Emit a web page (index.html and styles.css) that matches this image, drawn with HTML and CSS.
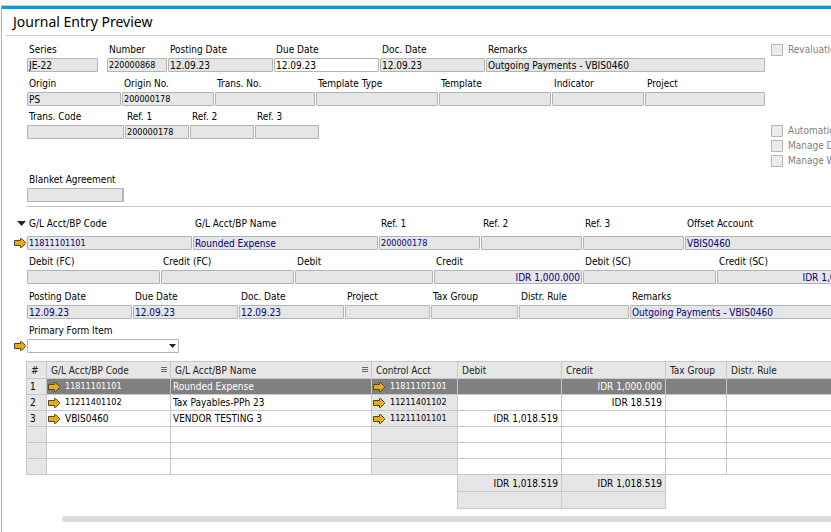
FILE: index.html
```html
<!DOCTYPE html>
<html lang="en">
<head>
    <meta charset="UTF-8">
    <title>Journal Entry Preview</title>
    <link rel="stylesheet" href="styles.css">
</head>
<body>
<svg class="defs" aria-hidden="true">
    <symbol id="arrow" viewBox="0 0 12 10">
        <path d="M.5 2.5h6v-2h1l4 4v1l-4 4h-1v-2h-6z" fill="#f0ab00" stroke="#4d4434"/>
    </symbol>
    <symbol id="menu" viewBox="0 0 6 6">
        <path d="M0 .5h6M0 2.5h6M0 4.5h6" stroke="#666"/>
    </symbol>
</svg>
<main class="window">
    <h1>Journal Entry Preview</h1>

    <section class="header">
        <div class="header-fields">
            <div class="row cols-series">
                <label class="field series">Series<input readonly value="JE-22"></label>
                <label class="field">Number<input class="code" readonly value="220000868"></label>
                <label class="field">Posting Date<input readonly value="12.09.23"></label>
                <label class="field">Due Date<input class="editable" value="12.09.23"></label>
                <label class="field">Doc. Date<input readonly value="12.09.23"></label>
                <label class="field">Remarks<input readonly value="Outgoing Payments - VBIS0460"></label>
            </div>
            <div class="row cols-origin">
                <label class="field">Origin<input readonly value="PS"></label>
                <label class="field">Origin No.<input class="code" readonly value="200000178"></label>
                <label class="field">Trans. No.<input readonly></label>
                <label class="field">Template Type<input readonly></label>
                <label class="field">Template<input readonly></label>
                <label class="field">Indicator<input readonly></label>
                <label class="field">Project<input readonly></label>
            </div>
            <div class="row cols-trans">
                <label class="field">Trans. Code<input readonly></label>
                <label class="field">Ref. 1<input class="code" readonly value="200000178"></label>
                <label class="field">Ref. 2<input readonly></label>
                <label class="field">Ref. 3<input readonly></label>
            </div>
            <div class="row cols-trans blanket">
                <label class="field">Blanket Agreement<input readonly></label>
            </div>
        </div>
        <div class="checks">
            <label class="check first"><input type="checkbox" disabled>Revaluation</label>
            <label class="check"><input type="checkbox" disabled>Automatic Tax</label>
            <label class="check"><input type="checkbox" disabled>Manage Deferred Tax</label>
            <label class="check"><input type="checkbox" disabled>Manage WTax</label>
        </div>
    </section>

    <section class="details">
        <div class="row cols-account">
            <div class="lead">
                <button class="toggle" aria-label="Collapse"><svg viewBox="0 0 9 5"><path d="M0 0h9L4.500 5z" fill="#223"/></svg></button>
                <button class="link" aria-label="Open account"><svg><use href="#arrow"/></svg></button>
            </div>
            <label class="field">G/L Acct/BP Code<input class="code" readonly value="11811101101"></label>
            <label class="field">G/L Acct/BP Name<input readonly value="Rounded Expense"></label>
            <label class="field">Ref. 1<input class="code" readonly value="200000178"></label>
            <label class="field">Ref. 2<input readonly></label>
            <label class="field">Ref. 3<input readonly></label>
            <label class="field">Offset Account<input readonly value="VBIS0460"></label>
        </div>
        <div class="row cols-amount">
            <div class="lead"></div>
            <label class="field">Debit (FC)<input readonly></label>
            <label class="field">Credit (FC)<input readonly></label>
            <label class="field">Debit<input readonly></label>
            <label class="field">Credit<input class="amount" readonly value="IDR 1,000.000"></label>
            <label class="field">Debit (SC)<input readonly></label>
            <label class="field">Credit (SC)<input class="amount" readonly value="IDR 1,000.000"></label>
        </div>
        <div class="row cols-dates">
            <div class="lead"></div>
            <label class="field">Posting Date<input readonly value="12.09.23"></label>
            <label class="field">Due Date<input readonly value="12.09.23"></label>
            <label class="field">Doc. Date<input readonly value="12.09.23"></label>
            <label class="field">Project<input readonly></label>
            <label class="field">Tax Group<input readonly></label>
            <label class="field">Distr. Rule<input readonly></label>
            <label class="field">Remarks<input readonly value="Outgoing Payments - VBIS0460"></label>
        </div>
        <div class="row cols-form">
            <div class="lead">
                <button class="link" aria-label="Open form item"><svg><use href="#arrow"/></svg></button>
            </div>
            <label class="field">Primary Form Item<select><option></option></select></label>
        </div>
    </section>

    <table class="lines">
        <colgroup>
            <col class="c-no"><col class="c-code"><col class="c-name"><col class="c-control">
            <col class="c-debit"><col class="c-credit"><col class="c-tax"><col>
        </colgroup>
        <thead>
        <tr>
            <th>#</th>
            <th><span class="head">G/L Acct/BP Code<svg class="menu"><use href="#menu"/></svg></span></th>
            <th><span class="head">G/L Acct/BP Name<svg class="menu"><use href="#menu"/></svg></span></th>
            <th>Control Acct</th>
            <th>Debit</th>
            <th>Credit</th>
            <th>Tax Group</th>
            <th>Distr. Rule</th>
        </tr>
        </thead>
        <tbody>
        <tr class="selected">
            <td class="grey">1</td>
            <td class="linked"><span class="cell code"><button class="link" aria-label="Open account"><svg><use href="#arrow"/></svg></button>11811101101</span></td>
            <td>Rounded Expense</td>
            <td class="linked grey"><span class="cell code"><button class="link" aria-label="Open account"><svg><use href="#arrow"/></svg></button>11811101101</span></td>
            <td></td>
            <td class="amount">IDR 1,000.000</td>
            <td></td>
            <td></td>
        </tr>
        <tr>
            <td class="grey">2</td>
            <td class="linked"><span class="cell code"><button class="link" aria-label="Open account"><svg><use href="#arrow"/></svg></button>11211401102</span></td>
            <td>Tax Payables-PPh 23</td>
            <td class="linked grey"><span class="cell code"><button class="link" aria-label="Open account"><svg><use href="#arrow"/></svg></button>11211401102</span></td>
            <td></td>
            <td class="amount">IDR 18.519</td>
            <td></td>
            <td></td>
        </tr>
        <tr>
            <td class="grey">3</td>
            <td class="linked"><span class="cell"><button class="link" aria-label="Open partner"><svg><use href="#arrow"/></svg></button>VBIS0460</span></td>
            <td>VENDOR TESTING 3</td>
            <td class="linked grey"><span class="cell code"><button class="link" aria-label="Open account"><svg><use href="#arrow"/></svg></button>11211101101</span></td>
            <td class="amount">IDR 1,018.519</td>
            <td></td>
            <td></td>
            <td></td>
        </tr>
        <tr><td class="grey"></td><td></td><td></td><td class="grey"></td><td></td><td></td><td></td><td></td></tr>
        <tr><td class="grey"></td><td></td><td></td><td class="grey"></td><td></td><td></td><td></td><td></td></tr>
        <tr><td class="grey"></td><td></td><td></td><td class="grey"></td><td></td><td></td><td></td><td></td></tr>
        </tbody>
        <tfoot>
        <tr>
            <td class="blank" colspan="4"></td>
            <td class="amount">IDR 1,018.519</td>
            <td class="amount">IDR 1,018.519</td>
            <td class="blank" colspan="2"></td>
        </tr>
        <tr>
            <td class="blank" colspan="4"></td>
            <td></td>
            <td></td>
            <td class="blank" colspan="2"></td>
        </tr>
        </tfoot>
    </table>
    <div class="scrollbar"></div>
</main>
</body>
</html>
```

FILE: styles.css
```css
* {
    box-sizing: border-box;
}
body {
    margin: 0;
    padding: 5px 0 0 1px;
    background: #fafafa;
    color: #000;
    font: 10px/16px "DejaVu Sans Condensed", "DejaVu Sans", sans-serif;
    font-stretch: condensed;
    overflow: hidden;
}
.defs {
    display: none;
}
.window {
    min-height: calc(100vh - 5px);
    background: #fff;
    border-top: 1px solid #c8c8c8;
    border-left: 1px solid #b4b4b4;
    overflow: hidden;
}
.window::before {
    content: "";
    display: block;
    height: 3px;
    background: #009de0;
}
h1 {
    margin: 0 0 0 4px;
    padding: 0 7px;
    border-bottom: 1px solid #c8c8c8;
    font: 14px/26px "Noto Sans", sans-serif;
}

/* fields */
.row {
    display: grid;
    column-gap: 1px;
}
.field {
    display: block;
    padding-left: 2px;
    white-space: nowrap;
}
input, select {
    display: block;
    width: calc(100% + 2px);
    height: 14px;
    margin: 0 0 0 -2px;
    padding: 0 1px;
    border: 1px solid #b0b4b4;
    border-radius: 1px;
    background: #e6e6e6;
    color: inherit;
    font: inherit;
    line-height: 12px;
}
.code {
    font-size: 9px;
}
.amount {
    text-align: right;
}
.editable, select {
    background: #fff;
}
button {
    display: block;
    padding: 0;
    border: 0;
    background: none;
}
button svg {
    display: block;
    width: 100%;
    height: 100%;
}
.link {
    width: 12px;
    height: 10px;
}
.toggle {
    width: 9px;
    height: 5px;
}

.header {
    display: flex;
    gap: 6px;
    margin-left: 24px;
    padding: 6px 0 4px;
    border-bottom: 1px solid #c8c8c8;
    white-space: nowrap;
}
.header-fields {
    display: grid;
    flex: none;
    row-gap: 3px;
    margin-left: 1px;
}
.cols-series {
    grid-template-columns: 79px 60px 105px 105px 105px 279px;
}
.series {
    margin-right: 8px;
}
.cols-origin {
    grid-template-columns: 94px 92px 100px 122px 112px 92px 120px;
    padding-top: 1px;
}
.cols-trans {
    grid-template-columns: 97px 64px 64px 64px;
}
.blanket {
    padding-top: 30px;
}
.blanket input {
    border-right-width: 2px;
}
.checks {
    display: grid;
    align-content: start;
}
.check {
    display: flex;
    align-items: center;
    gap: 5px;
    height: 15px;
    color: #808080;
}
.check.first {
    margin-bottom: 66px;
}
.check input {
    appearance: none;
    flex: none;
    width: 12px;
    height: 12px;
    margin: 0;
    background: #ececec;
}

.details {
    display: grid;
    row-gap: 4px;
    margin: 9px 0 8px 12px;
    overflow: hidden;
}
.details input {
    color: #000080;
}
.lead {
    display: flex;
    flex-direction: column;
    justify-content: flex-end;
    padding-bottom: 2px;
}
.cols-account {
    grid-template-columns: 12px 165px 185px 101px 101px 101px minmax(146px, 1fr);
}
.cols-account .lead {
    justify-content: space-between;
    padding-top: 5px;
}
.cols-account .toggle {
    align-self: flex-end;
}
.cols-account input {
    margin-top: 4px;
}
.cols-amount {
    grid-template-columns: 12px 133px 133px 138px 148px 133px 152px;
}
.cols-dates {
    grid-template-columns: 12px 105px 105px 105px 85px 87px 110px minmax(201px, 1fr);
    padding-top: 1px;
}
.cols-form {
    grid-template-columns: 12px 152px;
}
select {
    appearance: none;
    background: #fff url("data:image/svg+xml,%3Csvg xmlns='http://www.w3.org/2000/svg' viewBox='0 0 7 4'%3E%3Cpath d='M0 0h7L3.500 4z' fill='%23222'/%3E%3C/svg%3E") no-repeat right 2px center / 7px 4px;
}

/* journal lines */
.lines {
    width: calc(100% - 23px);
    margin-left: 24px;
    border-collapse: collapse;
    table-layout: fixed;
    white-space: nowrap;
}
.c-no {
    width: 20px;
}
.c-code {
    width: 124px;
}
.c-name {
    width: 201px;
}
.c-control {
    width: 86px;
}
.c-debit, .c-credit {
    width: 104px;
}
.c-tax {
    width: 61px;
}
.lines th, .lines td {
    height: 16px;
    padding: 0 3px 0 2px;
    border: 1px solid #c8c8c8;
    line-height: 15px;
}
.lines th {
    height: 17px;
    padding: 0 3px 0 4px;
    background: #e6e6e6;
    color: #222;
    font-weight: normal;
    text-align: left;
}
.lines .grey, .lines tfoot td {
    background: #e6e6e6;
}
.lines td:first-child {
    padding-left: 3px;
}
.lines .linked {
    padding-left: 1px;
}
.lines .selected td:not(:first-child) {
    background: #808080;
    color: #fff;
}
.lines tfoot td {
    height: 17px;
}
.lines tfoot .blank {
    border: 0;
    background: none;
}
.head, .cell {
    display: flex;
    align-items: center;
}
.head {
    justify-content: space-between;
}
.menu {
    width: 6px;
    height: 6px;
}
.cell {
    gap: 5px;
}
.scrollbar {
    height: 6px;
    margin: 7px 0 0 60px;
    border-radius: 3px 0 0 3px;
    background: #dcdcdc;
}
```
